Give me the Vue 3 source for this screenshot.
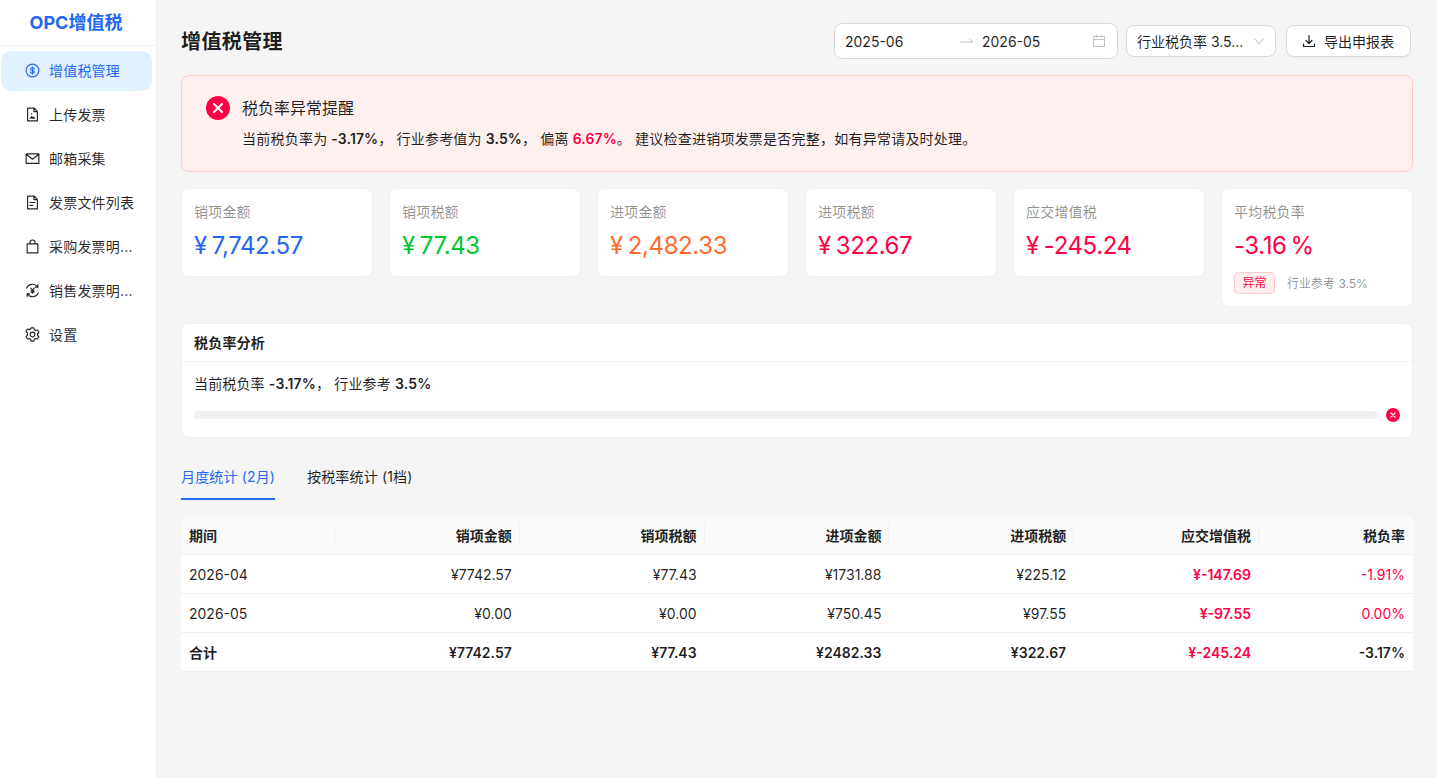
<template>
  <div class="layout">
    <aside class="sider">
      <div class="logo">OPC增值税</div>
      <nav class="menu">
        <div v-for="item in menus" :key="item.label" class="menu-item" :class="{ active: item.active }">
          <svg class="menu-icon" viewBox="0 0 16 16" fill="none" stroke="currentColor" stroke-width="1.25" stroke-linecap="round" stroke-linejoin="round">
            <path v-for="(d, i) in item.paths" :key="i" :d="d" />
            <path v-if="item.fill" :d="item.fill" fill="currentColor" stroke="none" />
          </svg>
          <span class="menu-label">{{ item.label }}</span>
        </div>
      </nav>
    </aside>

    <main class="content">
      <header class="page-head">
        <h1>增值税管理</h1>
        <div class="tools">
          <div class="range">
            <span class="range-val">2025-06</span>
            <svg class="range-sep" viewBox="0 0 16 8" fill="none" stroke="currentColor" stroke-width="1"><path d="M1 5h13L10.500 2" /></svg>
            <span class="range-val">2026-05</span>
            <svg class="range-cal" viewBox="0 0 14 14" fill="none" stroke="currentColor" stroke-width="1"><path d="M1.500 2.500h11v10h-11zM1.500 5.500h11M4.500 1v2.500M9.500 1v2.500" /></svg>
          </div>
          <div class="select">
            <span class="select-text">行业税负率 3.5...</span>
            <svg class="select-arrow" viewBox="0 0 12 12" fill="none" stroke="currentColor" stroke-width="1"><path d="M1.500 3.500 6 9l4.500-5.500" /></svg>
          </div>
          <button class="export-btn">
            <svg viewBox="0 0 14 14" fill="none" stroke="currentColor" stroke-width="1.200" stroke-linecap="round" stroke-linejoin="round"><path d="M7 1.500v7.500M4 6.500 7 9.500l3-3M1.500 10v2.500h11V10" /></svg>
            导出申报表
          </button>
        </div>
      </header>

      <section class="alert">
        <div class="alert-title">
          <span class="alert-icon">
            <svg viewBox="0 0 24 24" fill="none" stroke="#fff" stroke-width="2" stroke-linecap="round"><path d="M8 8l8 8M16 8l-8 8" /></svg>
          </span>
          税负率异常提醒
        </div>
        <p class="alert-desc">当前税负率为 <b>-3.17%</b>， 行业参考值为 <b>3.5%</b>， 偏离 <b class="red">6.67%</b>。 建议检查进销项发票是否完整，如有异常请及时处理。</p>
      </section>

      <section class="cards">
        <div v-for="c in cards" :key="c.title" class="card">
          <div class="card-title">{{ c.title }}</div>
          <div class="card-value" :class="c.color"><span v-if="c.prefix" class="yen">¥</span>{{ c.value }}<span v-if="c.suffix" class="pct">%</span></div>
          <div v-if="c.extra" class="card-extra">
            <span class="tag">异常</span>
            <span class="ref">行业参考 3.5%</span>
          </div>
        </div>
      </section>

      <section class="panel">
        <div class="panel-head">税负率分析</div>
        <div class="panel-body">
          <div class="rate-line">当前税负率 <b>-3.17%</b>， 行业参考 <b>3.5%</b></div>
          <div class="progress">
            <div class="track"></div>
            <span class="progress-icon">
              <svg viewBox="0 0 14 14" fill="none" stroke="#fff" stroke-width="1.300" stroke-linecap="round"><path d="M5 5l4 4M9 5l-4 4" /></svg>
            </span>
          </div>
        </div>
      </section>

      <div class="tabs">
        <div class="tab active">月度统计 (2月)</div>
        <div class="tab">按税率统计 (1档)</div>
      </div>

      <table class="table">
        <colgroup>
          <col class="col-edge" />
          <col v-for="n in 5" :key="n" />
          <col class="col-edge" />
        </colgroup>
        <thead>
          <tr>
            <th v-for="h in headers" :key="h">{{ h }}</th>
          </tr>
        </thead>
        <tbody>
          <tr v-for="r in rows" :key="r[0]">
            <td>{{ r[0] }}</td>
            <td>{{ r[1] }}</td>
            <td>{{ r[2] }}</td>
            <td>{{ r[3] }}</td>
            <td>{{ r[4] }}</td>
            <td class="red strong">{{ r[5] }}</td>
            <td class="red">{{ r[6] }}</td>
          </tr>
          <tr class="total">
            <td>合计</td>
            <td>¥7742.57</td>
            <td>¥77.43</td>
            <td>¥2482.33</td>
            <td>¥322.67</td>
            <td class="red">¥-245.24</td>
            <td>-3.17%</td>
          </tr>
        </tbody>
      </table>
    </main>
  </div>
</template>

<script setup>
const menus = [
  {
    label: "增值税管理",
    active: true,
    paths: [
      "M8 1.200a6.800 6.800 0 1 0 0 13.600a6.800 6.800 0 0 0 0-13.600z",
      "M10 6.300C9.700 5.500 9 5.100 8 5.100c-1.200 0-2 .6-2 1.450S6.800 7.700 8 8s2 .7 2 1.450S9.200 10.900 8 10.900c-1 0-1.700-.4-2-1.200M8 4.200v7.600",
    ],
  },
  {
    label: "上传发票",
    paths: ["M2.800 1.200h7L13.200 4.700v10.100H2.800zM9.500 1.200v3.700h3.700"],
    fill: "M4.800 12.500 7 9.300l1.200 1.400 1-.9 2 2.700zM6.300 6.600h1.400v1.400H6.300z",
  },
  {
    label: "邮箱采集",
    paths: ["M1.200 3h13.600v10.200H1.200zM1.400 3.400 8 8.800l6.600-5.400"],
  },
  {
    label: "发票文件列表",
    paths: ["M2.800 1.200h7L13.200 4.700v10.100H2.800zM9.500 1.200v3.700h3.700", "M5.200 8h5.600M5.200 11h3"],
  },
  {
    label: "采购发票明...",
    paths: ["M2.300 5.200h11.400v9.600H2.300zM5.300 5.200V3.800a2.700 2.700 0 0 1 5.400 0v1.400"],
  },
  {
    label: "销售发票明...",
    paths: [
      "M1.800 5.500a6.600 6.600 0 0 1 11.500-1.400M14.200 10.500a6.600 6.600 0 0 1-11.500 1.400",
      "M13.700 1.800v2.600h-2.600M2.300 14.200v-2.600h2.600",
      "M6.200 5.400 8 7.600l1.800-2.200M8 7.600v3.200M6.400 8.300h3.200M6.400 9.800h3.200",
    ],
  },
  {
    label: "设置",
    paths: [
      "M6.500 1h3l.5 2 1.400.8 2-.6 1.500 2.600-1.500 1.400v1.600l1.500 1.400-1.500 2.600-2-.6-1.400.8-.5 2h-3l-.5-2-1.400-.8-2 .6-1.500-2.600 1.500-1.400V6.200L1.100 4.800l1.500-2.600 2 .6L6 2z",
      "M8 5.500a2.500 2.500 0 1 0 0 5a2.500 2.500 0 0 0 0-5z",
    ],
  },
];

const cards = [
  { title: "销项金额", value: "7,742.57", color: "blue", prefix: true },
  { title: "销项税额", value: "77.43", color: "green", prefix: true },
  { title: "进项金额", value: "2,482.33", color: "orange", prefix: true },
  { title: "进项税额", value: "322.67", color: "red", prefix: true },
  { title: "应交增值税", value: "-245.24", color: "red", prefix: true },
  { title: "平均税负率", value: "-3.16", color: "red", suffix: true, extra: true },
];

const headers = ["期间", "销项金额", "销项税额", "进项金额", "进项税额", "应交增值税", "税负率"];

const rows = [
  ["2026-04", "¥7742.57", "¥77.43", "¥1731.88", "¥225.12", "¥-147.69", "-1.91%"],
  ["2026-05", "¥0.00", "¥0.00", "¥750.45", "¥97.55", "¥-97.55", "0.00%"],
];
</script>

<style>
html,
body {
  margin: 0;
  background: #f5f5f5;
}
</style>

<style scoped>
.layout {
  display: flex;
  min-height: 778px;
  font-family: Inter, "Noto Sans CJK SC", sans-serif;
  font-size: 14px;
  color: rgba(0, 0, 0, 0.88);
  background: #f5f5f5;
}
.sider {
  width: 156px;
  flex-shrink: 0;
  background: #fff;
  border-right: 1px solid #f0f0f0;
}
.logo {
  height: 45px;
  line-height: 46px;
  padding-right: 4px;
  text-align: center;
  font-size: 18px;
  font-weight: 700;
  color: #2468f2;
  border-bottom: 1px solid #f0f0f0;
}
.menu {
  padding: 5px 4px 0 1px;
}
.menu-item {
  box-sizing: border-box;
  height: 40px;
  margin-bottom: 4px;
  padding: 0 0 2px 24px;
  display: flex;
  align-items: center;
  gap: 9px;
  border-radius: 10px;
  color: rgba(0, 0, 0, 0.85);
}
.menu-item.active {
  background: #e1f1ff;
  color: #2468f2;
}
.menu-icon {
  width: 15px;
  height: 15px;
  flex-shrink: 0;
}
.menu-label {
  white-space: nowrap;
  letter-spacing: 0.2px;
}
.content {
  flex: 1;
  min-width: 0;
  padding: 23px 24px 24px;
}
.page-head {
  display: flex;
  align-items: center;
  justify-content: space-between;
  margin-bottom: 16px;
}
h1 {
  margin: 0;
  padding-top: 2px;
  font-size: 20px;
  font-weight: 600;
  line-height: 34px;
  letter-spacing: 0.4px;
}
.tools {
  display: flex;
  align-items: center;
  gap: 8px;
  margin-right: 2px;
}
.tools > :last-child {
  margin-left: 2px;
}
.range {
  width: 284px;
  height: 36px;
  box-sizing: border-box;
  padding: 0 11px 0 10px;
  display: flex;
  align-items: center;
  background: #fff;
  border: 1px solid #d9d9d9;
  border-radius: 8px;
}
.range-val {
  width: 114px;
}
.range-sep {
  width: 16px;
  height: 8px;
  color: #bfbfbf;
  margin-right: 7px;
}
.range-val + .range-sep + .range-val {
  width: 110px;
}
.range-cal {
  width: 14px;
  height: 14px;
  color: #bfbfbf;
  margin-left: auto;
}
.select {
  width: 150px;
  height: 32px;
  box-sizing: border-box;
  padding: 0 10px;
  display: flex;
  align-items: center;
  justify-content: space-between;
  background: #fff;
  border: 1px solid #d9d9d9;
  border-radius: 8px;
}
.select-text {
  white-space: nowrap;
}
.select-arrow {
  width: 12px;
  height: 12px;
  color: #bfbfbf;
}
.export-btn {
  width: 125px;
  height: 32px;
  display: flex;
  align-items: center;
  justify-content: center;
  gap: 8px;
  padding: 0 1px 0 0;
  font: inherit;
  color: inherit;
  background: #fff;
  border: 1px solid #d9d9d9;
  border-radius: 8px;
  box-shadow: 0 2px 0 rgba(0, 0, 0, 0.02);
}
.export-btn svg {
  width: 14px;
  height: 14px;
}
.alert {
  height: 97px;
  box-sizing: border-box;
  padding: 20px 24px;
  background: #fff0f0;
  border: 1px solid #ffccc7;
  border-radius: 8px;
  margin-bottom: 16px;
}
.alert-title {
  display: flex;
  align-items: center;
  gap: 12px;
  font-size: 16px;
  line-height: 24px;
}
.alert-icon {
  width: 24px;
  height: 24px;
  border-radius: 50%;
  background: #ff0044;
  display: block;
}
.alert-icon svg {
  display: block;
}
.alert-desc {
  margin: 8px 0 0 36px;
  line-height: 22px;
  letter-spacing: 0.23px;
  word-spacing: -0.2px;
}
.alert-desc b {
  font-weight: 600;
  letter-spacing: 0.1px;
}
.rate-line b {
  font-weight: 600;
}
.red {
  color: #ff0044;
}
.cards {
  display: grid;
  grid-template-columns: repeat(6, 1fr);
  gap: 16px;
  align-items: start;
  margin-bottom: 16px;
}
.card {
  padding: 12px 12px 12px;
  background: #fff;
  border: 1px solid #f0f0f0;
  border-radius: 8px;
}
.card-title {
  line-height: 22px;
  color: rgba(0, 0, 0, 0.45);
  letter-spacing: 0.2px;
}
.card-value {
  margin-top: 5px;
  font-size: 24px;
  line-height: 36px;
  letter-spacing: -0.4px;
}
.yen {
  margin-right: 5px;
}
.pct {
  margin-left: 4px;
}
.blue {
  color: #2468f2;
}
.green {
  color: #00c72e;
}
.orange {
  color: #ff6b2c;
}
.card-extra {
  display: flex;
  align-items: center;
  margin-top: 8px;
}
.tag {
  box-sizing: border-box;
  height: 22px;
  padding: 0 7.5px;
  margin-right: 12px;
  font-size: 12px;
  line-height: 19px;
  color: #ff0044;
  background: #fff0f0;
  border: 1px solid #ffccc7;
  border-radius: 4px;
}
.ref {
  margin-top: -2px;
  font-size: 12px;
  color: rgba(0, 0, 0, 0.45);
}
.panel {
  background: #fff;
  border: 1px solid #f0f0f0;
  border-radius: 8px;
  margin-bottom: 22px;
}
.panel-head {
  height: 37px;
  padding: 0 12px;
  line-height: 38px;
  font-weight: 600;
  letter-spacing: 0.2px;
  border-bottom: 1px solid #f0f0f0;
}
.panel-body {
  padding: 11px 12px 13px;
}
.rate-line {
  line-height: 22px;
  letter-spacing: 0.15px;
}
.progress {
  display: flex;
  align-items: center;
  gap: 8px;
  margin-top: 11px;
  height: 18px;
}
.track {
  flex: 1;
  height: 8px;
  border-radius: 4px;
  background: #f0f0f0;
}
.progress-icon {
  width: 14px;
  height: 14px;
  border-radius: 50%;
  background: #ff0044;
}
.progress-icon svg {
  display: block;
}
.tabs {
  display: flex;
  gap: 32px;
  height: 39px;
  margin-bottom: 16px;
  margin-right: 4px;
  border-bottom: 1px solid #f0f0f0;
}
.tab {
  height: 40px;
  box-sizing: border-box;
  line-height: 34px;
  letter-spacing: 0.15px;
}
.tab.active {
  color: #2468f2;
  border-bottom: 2px solid #2468f2;
}
.table {
  width: 100%;
  table-layout: fixed;
  border-collapse: separate;
  border-spacing: 0;
  background: #fff;
  border-radius: 8px 8px 0 0;
}
.col-edge {
  width: 154px;
}
th,
td {
  height: 38px;
  padding: 0 8px;
  text-align: right;
  border-bottom: 1px solid #f0f0f0;
  white-space: nowrap;
}
th:first-child,
td:first-child {
  text-align: left;
}
th {
  position: relative;
  font-weight: 600;
  background: #fafafa;
}
th:first-child {
  border-top-left-radius: 8px;
}
th:last-child {
  border-top-right-radius: 8px;
}
th:not(:last-child)::before {
  content: "";
  position: absolute;
  top: 8px;
  right: 0;
  width: 1px;
  height: 22px;
  background: #f0f0f0;
}
.strong,
.total td {
  font-weight: 600;
}
</style>
